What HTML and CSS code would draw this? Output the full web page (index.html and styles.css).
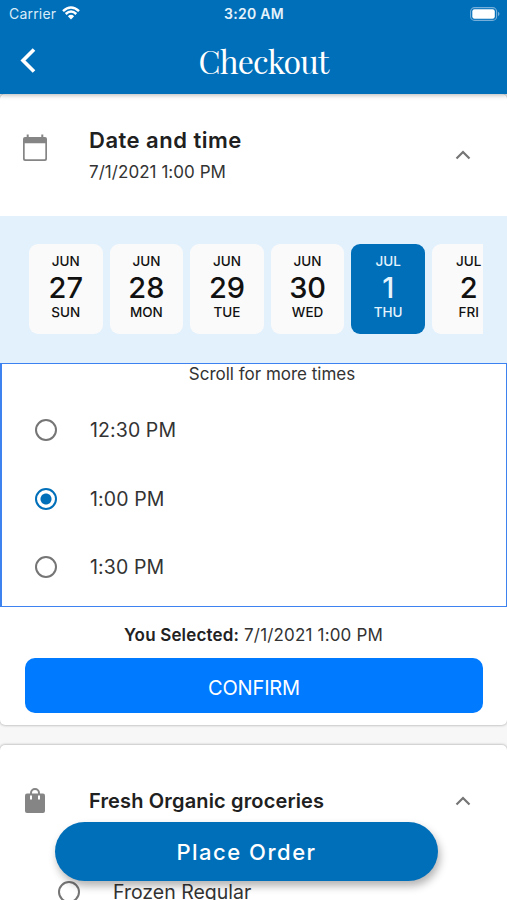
FILE: index.html
```html
<!DOCTYPE html>
<html lang="en">
<head>
<meta charset="utf-8">
<title>Checkout</title>
<link rel="stylesheet" href="styles.css">
</head>
<body>
<header class="app-bar">
  <div class="status">
    <div class="carrier"><span>Carrier</span>
      <svg width="18" height="14" viewBox="0 0 18 14" fill="none" stroke="#fff" stroke-width="2.5"><path d="M1 5.1Q9-2.1 17 5.1M3.7 8Q9 3.1 14.3 8"/><path d="M5.9 10.2Q9 7.4 12.1 10.2L9 13.4Z" fill="#fff" stroke="none"/></svg>
    </div>
    <span class="clock">3:20 AM</span>
    <svg class="battery" width="31" height="14" viewBox="0 0 31 14"><rect x=".6" y=".6" width="26" height="12.8" rx="4" fill="none" stroke="#76afd9" stroke-width="1.1"/><rect x="2.3" y="2.3" width="22.5" height="9.4" rx="2.2" fill="#fff"/><path d="M28 4.8Q31 7 28 9.2Z" fill="#76afd9"/></svg>
  </div>
  <div class="nav">
    <svg class="back" width="16" height="25" viewBox="0 0 16 25" fill="none" stroke="#fff" stroke-width="3.6"><path d="M14 1.500 3 12.500l11 11"/></svg>
    <h1>Checkout</h1>
  </div>
</header>
<main>
  <section class="card schedule">
    <div class="card-head">
      <svg class="lead" width="26" height="28" viewBox="0 0 26 28"><path d="M3 2.900h20q2 0 2 2V25q0 2-2 2H3q-2 0-2-2V4.900q0-2 2-2Z" fill="#858585"/><path d="M2.700 9.300h20.600V24.300q0 1-1 1H3.700q-1 0-1-1Z" fill="#fff"/><path d="M5.700 .5v4M20.300 .5v4" stroke="#858585" stroke-width="2"/></svg>
      <div class="titles"><h2>Date and time</h2><p>7/1/2021 1:00 PM</p></div>
      <svg class="chev" width="16" height="10" viewBox="0 0 16 10" fill="none" stroke="#757575" stroke-width="2.2"><path d="M1.500 8.500 8 2l6.500 6.500"/></svg>
    </div>
    <div class="dates">
      <div class="strip">
        <div class="day"><span>JUN</span><b>27</b><span>SUN</span></div>
        <div class="day"><span>JUN</span><b>28</b><span>MON</span></div>
        <div class="day"><span>JUN</span><b>29</b><span>TUE</span></div>
        <div class="day"><span>JUN</span><b>30</b><span>WED</span></div>
        <div class="day active"><span>JUL</span><b>1</b><span>THU</span></div>
        <div class="day"><span>JUL</span><b>2</b><span>FRI</span></div>
      </div>
    </div>
    <div class="times">
      <p class="hint">Scroll for more times</p>
      <div class="option"><i class="radio"></i><span>12:30 PM</span></div>
      <div class="option"><i class="radio on"></i><span>1:00 PM</span></div>
      <div class="option"><i class="radio"></i><span>1:30 PM</span></div>
    </div>
    <p class="selected"><strong>You Selected:</strong> 7/1/2021 1:00 PM</p>
    <button class="confirm">CONFIRM</button>
  </section>
  <section class="card groceries">
    <div class="card-head">
      <svg class="lead" width="26" height="26" viewBox="0 0 26 26"><path d="M5 5.500h16q2 0 2 2V23q0 2-2 2H5q-2 0-2-2V7.500q0-2 2-2Z" fill="#858585"/><path d="M9 6V5a4 4 0 0 1 8 0v1" fill="none" stroke="#858585" stroke-width="2"/><path d="M9 7.500v4M17 7.500v4" stroke="#fff" stroke-width="2"/></svg>
      <div class="titles"><h2>Fresh Organic groceries</h2></div>
      <svg class="chev" width="16" height="10" viewBox="0 0 16 10" fill="none" stroke="#757575" stroke-width="2.2"><path d="M1.500 8.500 8 2l6.500 6.500"/></svg>
    </div>
    <div class="option sub"><i class="radio"></i><span>Frozen Regular</span></div>
  </section>
</main>
<button class="order">Place Order</button>
</body>
</html>
```
FILE: styles.css
```css
* { box-sizing: border-box; }
body { margin: 0; height: 900px; overflow: hidden; position: relative; background: #f7f7f7; font-family: Inter, "Liberation Sans", sans-serif; color: #333; }
h1, h2, p { margin: 0; }
svg { display: block; flex: none; }
button { border: 0; font-family: inherit; color: #fff; }
.app-bar { position: relative; z-index: 1; height: 94px; background: #006fb9; color: #fff; box-shadow: 0 1px 5px rgba(0,0,0,.3); }
.status { height: 28px; display: grid; grid-template-columns: 1fr auto 1fr; align-items: center; padding: 0 6px 0 9px; font-size: 14px; }
.carrier { display: flex; align-items: center; gap: 6px; color: #d9ebf8; letter-spacing: .2px; }
.carrier svg { margin-top: -2px; }
.status span { position: relative; top: -1px; }
.clock { font-weight: 600; color: #e5f2fb; margin-left: -2px; letter-spacing: .3px; }
.battery { justify-self: end; margin-top: -1px; }
.nav { height: 66px; display: grid; grid-template-columns: 20px 1fr 20px; align-items: center; padding: 0 20px; }
.back { margin-top: -2px; }
h1 { font: 400 32px/40px "Playfair Display", "Liberation Serif", serif; text-align: center; padding-left: 20px; letter-spacing: -.85px; }
.card { background: #fff; border-radius: 5px; box-shadow: 0 0 3px rgba(0,0,0,.4); }
.schedule { height: 631px; margin-bottom: 20px; }
.card-head { height: 122px; display: flex; align-items: center; padding: 0 36px 0 22px; }
.lead { width: 26px; margin-right: 41px; }
.schedule .lead { margin-top: -15px; }
.titles { flex: 1; }
h2 { font-size: 22px; line-height: 30px; font-weight: 600; color: #202020; white-space: nowrap; letter-spacing: .5px; }
.titles p { font-size: 17px; line-height: 24px; margin-top: 5px; letter-spacing: .05px; }
.schedule .titles { margin-top: -2px; }
.dates { height: 147px; background: #e3f1fc; padding: 28px 24.5px 0 29px; }
.strip { display: flex; gap: 7px; overflow: hidden; }
.day { flex: 0 0 73.6px; height: 90px; border-radius: 9px; background: #fafafa; color: #111; display: flex; flex-direction: column; align-items: center; padding-top: 8px; font-size: 13.5px; line-height: 18px; font-weight: 500; }
.day b { font-size: 29px; line-height: 34px; font-weight: 500; position: relative; top: 1px; }
.active { background: #006fb9; color: #e6f4fd; }
.day b + span { margin-top: -1px; }
.times { height: 244px; border: 1px solid #3e82f0; border-left-width: 2px; }
.hint { text-align: center; font-size: 17px; line-height: 20px; padding-left: 36px; }
.option { height: 68.5px; display: flex; align-items: center; padding-left: 33px; font-size: 19.5px; letter-spacing: .1px; }
.hint + .option { margin-top: 12px; }
.radio { width: 22px; height: 22px; border: 2.5px solid #757575; border-radius: 50%; margin-right: 33px; flex: none; }
.on { border-color: #006fb9; background: radial-gradient(circle, #006fb9 5px, #fff 6px); }
.selected { text-align: center; font-size: 17px; line-height: 24px; margin-top: 16px; letter-spacing: .17px; }
.selected strong { font-weight: 600; color: #222; }
.confirm { display: block; width: 458px; height: 55px; margin: 11px 0 0 25px; padding: 4px 0 0; border-radius: 10px; background: #007aff; font-size: 20px; letter-spacing: -.15px; }
.groceries { height: 155px; overflow: hidden; border-radius: 5px 5px 0 0; }
.groceries .card-head { height: 112px; }
.groceries h2 { font-size: 20px; letter-spacing: .15px; }
.sub { height: 69px; padding-left: 58px; letter-spacing: 0; }
.order { position: absolute; left: 55px; top: 822px; width: 383px; height: 59px; border-radius: 30px; background: #006fb9; font-size: 22px; font-weight: 500; letter-spacing: 1.5px; box-shadow: 2px 5px 8px rgba(0,0,0,.3); }
```
